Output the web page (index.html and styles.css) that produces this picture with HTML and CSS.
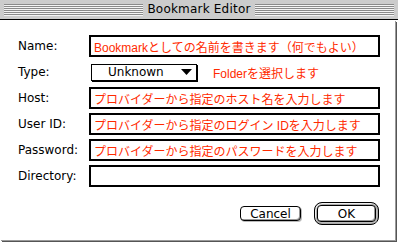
FILE: index.html
```html
<!DOCTYPE html>
<html lang="ja">
<head>
<meta charset="utf-8">
<title>Bookmark Editor</title>
<link rel="stylesheet" href="styles.css">
</head>
<body>
<div class="titlebar">
  <span class="ridges"></span>
  <span class="title">Bookmark Editor</span>
  <span class="ridges"></span>
</div>
<div class="panel">
  <div class="form">
    <div class="label">Name:</div>
    <div class="field">Bookmarkとしての名前を書きます（何でもよい）</div>

    <div class="label">Type:</div>
    <div class="type-row">
      <div class="popup">
        <span class="popup-text">Unknown</span>
        <svg class="arrow" width="11" height="6" viewBox="0 0 11 6"><polygon points="0,0 11,0 5.5,6" fill="#000"/></svg>
      </div>
      <span class="hint">Folderを選択します</span>
    </div>

    <div class="label">Host:</div>
    <div class="field">プロバイダーから指定のホスト名を入力します</div>

    <div class="label">User ID:</div>
    <div class="field">プロバイダーから指定のログイン IDを入力します</div>

    <div class="label">Password:</div>
    <div class="field">プロバイダーから指定のパスワードを入力します</div>

    <div class="label">Directory:</div>
    <div class="field"></div>
  </div>
  <div class="buttons">
    <div class="btn">Cancel</div>
    <div class="ok-ring"><div class="btn ok">OK</div></div>
  </div>
</div>
</body>
</html>
```
FILE: styles.css
```css
html, body {
  margin: 0;
  padding: 0;
  background: #fff;
}
body {
  width: 398px;
  height: 243px;
  overflow: hidden;
  font-family: "DejaVu Sans", "Noto Sans CJK JP", sans-serif;
  font-size: 12px;
  color: #000;
}
.titlebar {
  height: 19px;
  background: #cccccc;
  border-bottom: 1px solid #000;
  display: flex;
  align-items: center;
  padding: 0 4px;
}
.ridges {
  flex: 1;
  height: 12px;
  background: repeating-linear-gradient(#8a8a8a 0 1px, #f4f4f4 1px 2px);
}
.title {
  padding: 0 4px;
  font-size: 12px;
  line-height: 19px;
  letter-spacing: 0.2px;
}
.panel {
  width: 395px;
  height: 220px;
  box-sizing: border-box;
  padding: 15px 16px 0 18px;
  background: #fff;
  box-shadow: 1px 1px 0 #9a9a9a, 2px 2px 0 #555;
}
.form {
  display: grid;
  grid-template-columns: 71px 291px;
  grid-auto-rows: 22px;
  row-gap: 4px;
}
.label {
  display: flex;
  align-items: center;
  font-size: 12px;
}
.field {
  box-sizing: border-box;
  border: 1px solid #000;
  outline: 1px solid #000;
  outline-offset: -2px;
  padding: 0 4px;
  display: flex;
  align-items: center;
  color: #ff2a00;
  font-family: "Liberation Sans", "Noto Sans CJK JP", sans-serif;
  font-size: 12px;
  white-space: nowrap;
  overflow: hidden;
}
.type-row {
  display: flex;
  align-items: center;
}
.popup {
  box-sizing: border-box;
  margin-left: 2px;
  width: 106px;
  height: 17px;
  border: 1px solid #000;
  box-shadow: 1px 1px 0 #000;
  display: flex;
  align-items: center;
  padding: 0 4px 0 16px;
}
.popup-text {
  flex: 1;
  font-size: 12px;
}
.arrow {
  display: block;
}
.hint {
  margin-left: 16px;
  color: #ff2a00;
  font-family: "Liberation Sans", "Noto Sans CJK JP", sans-serif;
  font-size: 12px;
}
.buttons {
  display: flex;
  justify-content: flex-end;
  align-items: center;
  gap: 13px;
  margin-top: 15px;
}
.btn {
  box-sizing: border-box;
  width: 61px;
  height: 15px;
  border: 1px solid #000;
  border-radius: 4px;
  background: #fff;
  box-shadow: inset -1px -1px 0 #999, 1px 1px 0 #bbb;
  display: flex;
  align-items: center;
  justify-content: center;
  font-size: 12px;
}
.ok-ring {
  box-sizing: border-box;
  width: 65px;
  height: 23px;
  border: 1px solid #000;
  border-radius: 8px;
  background: #aaa;
  box-shadow: inset 1px 1px 0 #eee;
  padding: 2px;
  display: flex;
}
.btn.ok {
  flex: 1;
  width: auto;
  height: auto;
}
```
